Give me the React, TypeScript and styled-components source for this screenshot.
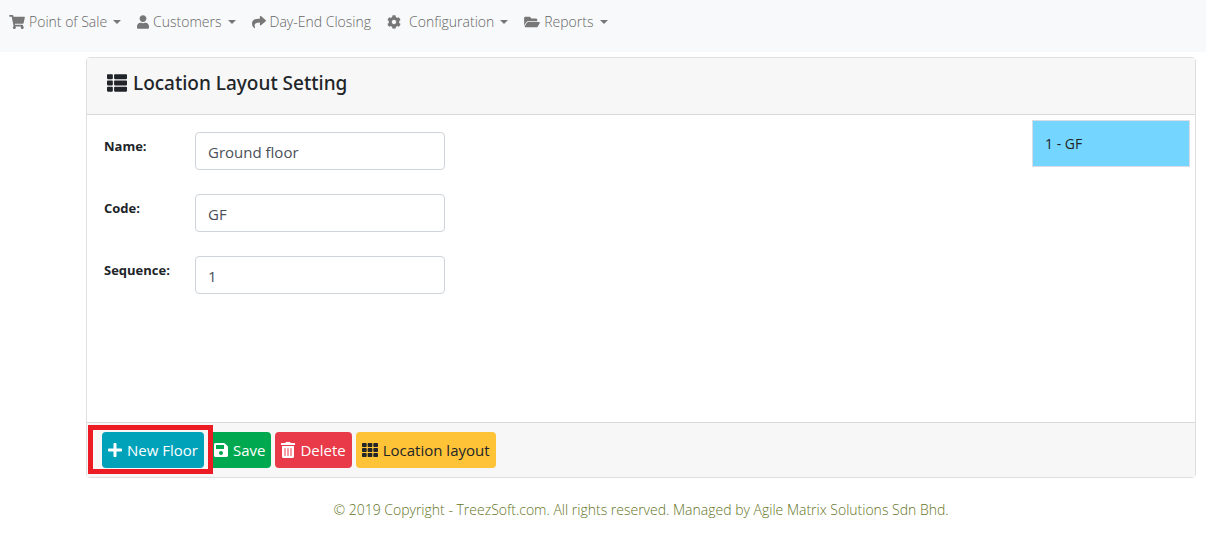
import React from 'react';
import styled, { createGlobalStyle } from 'styled-components';
import {
  FaShoppingCart, FaUser, FaShare, FaCog, FaFolderOpen, FaThList, FaPlus, FaSave, FaTrashAlt, FaTh,
} from 'react-icons/fa';

const GlobalStyle = createGlobalStyle`
  *, *::before, *::after { box-sizing: border-box; }
  body {
    margin: 0;
    background: #fff;
    color: #212529;
    font-family: "Segoe UI", "Open Sans", "Noto Sans", sans-serif;
    font-size: 15px;
    line-height: 24px;
  }
  svg { flex: none; }
`;

const NavBar = styled.nav`
  display: flex;
  align-items: flex-start;
  min-height: 52px;
  padding: 10px 9px;
  gap: 16px;
  background: #f8f9fa;
`;

const NavLink = styled.a<{ $icon: number; $gap?: number }>`
  display: flex;
  align-items: center;
  color: #666;
  font-size: 14px;
  font-weight: 300;
  line-height: 24px;
  text-decoration: none;
  white-space: nowrap;
  svg {
    width: ${({ $icon }) => $icon}px;
    height: 14px;
    margin-right: ${({ $gap = 4 }) => $gap}px;
    color: #777;
  }
`;

const Caret = styled.span`
  margin-left: 6px;
  border: 4px solid transparent;
  border-top-color: #777;
  border-bottom: 0;
`;

const Main = styled.main`
  padding: 5px 10px 0 86px;
`;

const Card = styled.section`
  border: 1px solid #dfdfdf;
  border-radius: 4px;
`;

const CardHeader = styled.header`
  padding: 13px 20px 19px;
  background: #f7f7f7;
  border-bottom: 1px solid #d9d9d9;
`;

const Title = styled.h1`
  display: flex;
  align-items: center;
  gap: 6px;
  margin: 0;
  font-family: "Segoe UI", "Noto Sans", sans-serif;
  font-size: 19px;
  font-weight: 500;
  line-height: 24px;
  svg { font-size: 20px; }
`;

const CardBody = styled.div`
  display: flex;
  justify-content: space-between;
  min-height: 307px;
  padding: 5px 5px 5px 17px;
`;

const Form = styled.form`
  display: flex;
  flex-direction: column;
  gap: 24px;
  padding-top: 12px;
`;

const Field = styled.div`
  display: grid;
  grid-template-columns: 91px 250px;
  align-items: start;
`;

const Label = styled.label`
  padding-top: 4px;
  font-size: 13px;
  font-weight: 700;
  line-height: 20px;
`;

const Input = styled.input`
  width: 100%;
  height: 38px;
  padding: 2px 12px 0;
  border: 1px solid #ced4da;
  border-radius: 4px;
  background: #fff;
  color: #495057;
  font: inherit;
`;

const FloorList = styled.ul`
  width: 158px;
  margin: 0;
  padding: 0;
  list-style: none;
`;

const FloorButton = styled.button`
  width: 100%;
  height: 47px;
  padding: 0 12px;
  border: 1px solid #d9dce4;
  background: #74d6ff;
  color: #212529;
  font: inherit;
  font-size: 14px;
  text-align: left;
`;

const CardFooter = styled.footer`
  display: flex;
  gap: 4px;
  padding: 9px 15px;
  background: #f7f7f7;
  border-top: 1px solid #d9d9d9;
`;

const Highlighted = styled.div`
  position: relative;
  &::after {
    content: "";
    position: absolute;
    inset: -7px -9px -6px -14px;
    border: 5px solid #ed1c24;
    pointer-events: none;
    z-index: 1;
  }
`;

const Button = styled.button<{ $bg: string; $color?: string; $icon?: number }>`
  display: flex;
  align-items: center;
  gap: 5px;
  height: 36px;
  padding: 0 6px;
  border: 0;
  border-radius: 4px;
  background: ${({ $bg }) => $bg};
  color: ${({ $color = '#fff' }) => $color};
  font: inherit;
  white-space: nowrap;
  svg {
    width: ${({ $icon = 14 }) => $icon}px;
    height: 16px;
  }
`;

const Copyright = styled.footer`
  padding: 20px 0 16px;
  color: #64751f;
  font-size: 14px;
  font-weight: 300;
  text-align: center;
`;

const fields = [
  { id: 'name', label: 'Name:', value: 'Ground floor' },
  { id: 'code', label: 'Code:', value: 'GF' },
  { id: 'sequence', label: 'Sequence:', value: '1' },
];

export default function App() {
  return (
    <>
      <GlobalStyle />
      <NavBar>
        <NavLink href="#pos" $icon={16}><FaShoppingCart /><span>Point of Sale</span><Caret /></NavLink>
        <NavLink href="#customers" $icon={12}><FaUser /><span>Customers</span><Caret /></NavLink>
        <NavLink href="#closing" $icon={14}><FaShare /><span>Day-End Closing</span></NavLink>
        <NavLink href="#configuration" $icon={14} $gap={8}><FaCog /><span>Configuration</span><Caret /></NavLink>
        <NavLink href="#reports" $icon={16}><FaFolderOpen /><span>Reports</span><Caret /></NavLink>
      </NavBar>
      <Main>
        <Card>
          <CardHeader>
            <Title><FaThList /><span>Location Layout Setting</span></Title>
          </CardHeader>
          <CardBody>
            <Form>
              {fields.map((f) => (
                <Field key={f.id}>
                  <Label htmlFor={f.id}>{f.label}</Label>
                  <Input id={f.id} defaultValue={f.value} />
                </Field>
              ))}
            </Form>
            <FloorList>
              <li><FloorButton type="button">1 - GF</FloorButton></li>
            </FloorList>
          </CardBody>
          <CardFooter>
            <Highlighted>
              <Button type="button" $bg="#00a2b9"><FaPlus /><span>New Floor</span></Button>
            </Highlighted>
            <Button type="button" $bg="#00a94f"><FaSave /><span>Save</span></Button>
            <Button type="button" $bg="#e83a49"><FaTrashAlt /><span>Delete</span></Button>
            <Button type="button" $bg="#ffc337" $color="#212529" $icon={16}><FaTh /><span>Location layout</span></Button>
          </CardFooter>
        </Card>
        <Copyright>© 2019 Copyright - TreezSoft.com. All rights reserved. Managed by Agile Matrix Solutions Sdn Bhd.</Copyright>
      </Main>
    </>
  );
}
